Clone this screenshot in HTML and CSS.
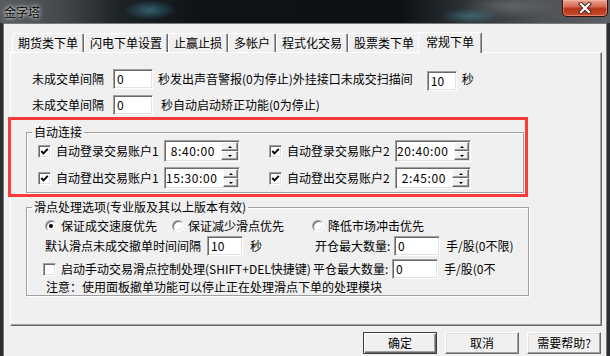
FILE: index.html
```html
<!DOCTYPE html>
<html>
<head>
    <meta charset="utf-8">
    <title>金字塔</title>
    <link rel="stylesheet" href="styles.css">
</head>
<body>
    <div class="titlebar">
        <span class="title">金字塔</span>
        <a class="close">
            <svg width="16" height="12" viewBox="0 0 16 12">
                <path d="M4 2 L12 10 M12 2 L4 10" stroke="#4a2a22" stroke-width="4.2" stroke-linecap="square" fill="none"/>
                <path d="M4 2 L12 10 M12 2 L4 10" stroke="#fff" stroke-width="2.2" stroke-linecap="square" fill="none"/>
            </svg>
        </a>
    </div>
    <div class="client">
        <ul class="tabs">
            <li>期货类下单</li>
            <li>闪电下单设置</li>
            <li>止赢止损</li>
            <li>多帐户</li>
            <li>程式化交易</li>
            <li>股票类下单</li>
            <li class="on">常规下单</li>
        </ul>
        <div class="panel">
            <div class="line">
                <span class="lbl">未成交单间隔</span>
                <span class="edit w40">0</span>
                <span class="after1">秒发出声音警报(0为停止)外挂接口未成交扫描间</span>
                <span class="edit w30 low">10</span>
                <span class="unit">秒</span>
            </div>
            <div class="line">
                <span class="lbl">未成交单间隔</span>
                <span class="edit w40">0</span>
                <span class="after2">秒自动启动矫正功能(0为停止)</span>
            </div>

            <fieldset class="grp1">
                <legend>自动连接</legend>
                <div class="auto">
                    <div class="item">
                        <span class="cb"><svg width="9" height="9" viewBox="0 0 9 9"><path d="M1.3 4 L3.5 6.3 L7.8 1.8" stroke="#000" stroke-width="1.9" fill="none"/></svg></span>
                        <span class="name">自动登录交易账户1</span>
                        <span class="spin"><span class="val">8:40:00</span><span class="btns"><i class="up"></i><i class="dn"></i></span></span>
                    </div>
                    <div class="item">
                        <span class="cb"><svg width="9" height="9" viewBox="0 0 9 9"><path d="M1.3 4 L3.5 6.3 L7.8 1.8" stroke="#000" stroke-width="1.9" fill="none"/></svg></span>
                        <span class="name">自动登录交易账户2</span>
                        <span class="spin"><span class="val">20:40:00</span><span class="btns"><i class="up"></i><i class="dn"></i></span></span>
                    </div>
                    <div class="item">
                        <span class="cb"><svg width="9" height="9" viewBox="0 0 9 9"><path d="M1.3 4 L3.5 6.3 L7.8 1.8" stroke="#000" stroke-width="1.9" fill="none"/></svg></span>
                        <span class="name">自动登出交易账户1</span>
                        <span class="spin"><span class="val">15:30:00</span><span class="btns"><i class="up"></i><i class="dn"></i></span></span>
                    </div>
                    <div class="item">
                        <span class="cb"><svg width="9" height="9" viewBox="0 0 9 9"><path d="M1.3 4 L3.5 6.3 L7.8 1.8" stroke="#000" stroke-width="1.9" fill="none"/></svg></span>
                        <span class="name">自动登出交易账户2</span>
                        <span class="spin"><span class="val">2:45:00</span><span class="btns"><i class="up"></i><i class="dn"></i></span></span>
                    </div>
                </div>
            </fieldset>

            <fieldset class="grp2">
                <legend>滑点处理选项(专业版及其以上版本有效)</legend>
                <div class="slip">
                    <div class="radios">
                        <span class="opt"><span class="rd on"></span>保证成交速度优先</span>
                        <span class="opt"><span class="rd"></span>保证减少滑点优先</span>
                        <span class="opt"><span class="rd"></span>降低市场冲击优先</span>
                    </div>
                    <div class="srow">
                        <span class="left">默认滑点未成交撤单时间间隔<span class="edit w36">10</span><span class="unit2">秒</span></span>
                        <span class="right open"><span class="qty">开仓最大数量:</span><span class="edit w46">0</span><span class="hint">手/股(0不限)</span></span>
                    </div>
                    <div class="srow tall">
                        <span class="left"><span class="cb nochk"></span>启动手动交易滑点控制处理(SHIFT+DEL快捷键)</span>
                        <span class="right close2"><span class="qty">平仓最大数量:</span><span class="edit w46">0</span><span class="hint">手/股(0不</span></span>
                    </div>
                    <div class="note">注意：使用面板撤单功能可以停止正在处理滑点下单的处理模块</div>
                </div>
            </fieldset>
        </div>

        <div class="actions">
            <button class="btn def">确定</button>
            <button class="btn">取消</button>
            <button class="btn">需要帮助?</button>
        </div>

        <div class="mark"></div>
    </div>
</body>
</html>
```

FILE: styles.css
```css
* { box-sizing: border-box; }
html, body { margin: 0; padding: 0; }
body { width: 610px; height: 356px; overflow: hidden; background: #2c3033; color: #000; font: 12px/14px "Noto Sans CJK SC", "Noto Sans", sans-serif; }

/* title bar */
.titlebar { height: 23px; display: flex; align-items: flex-start;
    background:
        radial-gradient(ellipse 26px 10px at 150px 10px, rgba(70,150,175,.55), transparent),
        radial-gradient(ellipse 30px 8px at 470px 16px, rgba(80,160,180,.45), transparent),
        radial-gradient(ellipse 50px 12px at 510px 6px, rgba(120,125,130,.55), transparent),
        linear-gradient(90deg, #585c60 0, #45494d 60px, #1c2226 120px, #0d1317 200px, #0b1115 400px, #2a2f33 460px, #4d5155 540px, #5c6064 610px); }
.title { margin: 4px 0 0 4px; line-height: 16px; text-shadow: 0 0 3px #fff, 0 0 6px rgba(255,255,255,.7); }
.close { margin: 0 2px 0 auto; width: 46px; height: 17px; display: flex; align-items: center; justify-content: center;
    border: 1px solid #3a0e06; border-top: 0; border-radius: 0 0 5px 5px;
    background: linear-gradient(#e8a898, #d66a52 40%, #b8321a 55%, #c8502e);
    box-shadow: inset 0 0 0 1px rgba(255,190,175,.45); }

/* client */
.client { position: relative; height: 333px; margin: 0 3px; background: #f0f0f0; border: 1px solid #7a7a7a; border-bottom: 0; }

.tabs { display: flex; align-items: flex-end; height: 19px; margin: 9px 0 0 8px; padding: 0; list-style: none; }
.tabs li { height: 19px; padding: 0 5px; line-height: 18px; white-space: nowrap;
    border: 1px solid #fff; border-right-color: #696969; border-bottom: 0; border-radius: 2px 2px 0 0;
    box-shadow: inset -1px 0 #a0a0a0; }
.tabs li.on { height: 21px; margin: 0 -2px -1px; padding: 0 7px; line-height: 17px; position: relative; z-index: 1; background: #f0f0f0; }

.panel { width: 592px; height: 274px; margin-left: 6px; padding: 16px 0 0 15px;
    border: 1px solid; border-color: #fff #696969 #696969 #fff; box-shadow: inset -1px -1px #a0a0a0; }

.line { display: flex; align-items: center; height: 20px; margin-left: 6px; white-space: nowrap; }
.line + .line { margin-top: 6px; }
.lbl { width: 72px; }
.after1 { margin-left: 5px; }
.after2 { margin-left: 8px; }
.line .w40 { margin-left: 9px; }
.line .w30 { margin-left: 14px; }
.low { margin-top: 4px; }
.unit { margin-left: 5px; }

.edit { display: inline-block; height: 20px; padding: 2px 0 0 3px; line-height: 14px; background: #fff; vertical-align: middle;
    border: 1px solid; border-color: #a0a0a0 #fff #fff #a0a0a0; box-shadow: inset 1px 1px #696969, inset -1px -1px #e3e3e3; }
.w30 { width: 30px; }
.w36 { width: 36px; }
.w40 { width: 40px; }
.w46 { width: 46px; }

/* group boxes */
fieldset { min-width: 0; margin: 0; padding: 0; border: 1px solid #a0a0a0; box-shadow: 1px 1px 0 #fff, inset 1px 1px 0 #fff; }
legend { margin-left: 5px; padding: 0 2px; line-height: 14px; }
.grp1 { width: 498px; margin-top: 10px; padding-bottom: 3px; }
.grp2 { width: 503px; margin-top: 7px; padding-bottom: 1px; }

.auto { display: grid; grid-template-columns: 231px auto; row-gap: 5px; margin-top: 1px; padding-left: 11px; }
.item { display: flex; align-items: center; height: 22px; white-space: nowrap; }
.name { width: 103px; margin-left: 5px; }

.cb { display: flex; align-items: center; justify-content: center; flex: none; width: 13px; height: 13px; background: #fff;
    border: 1px solid; border-color: #a0a0a0 #fff #fff #a0a0a0; box-shadow: inset 1px 1px #696969, inset -1px -1px #e3e3e3; }

.spin { display: flex; width: 76px; height: 22px; margin-left: 5px; background: #fff;
    border: 1px solid; border-color: #a0a0a0 #fff #fff #a0a0a0; box-shadow: inset 1px 1px #696969, inset -1px -1px #e3e3e3; padding: 1px 1px 1px 1px; }
.spin .val { flex: 1; text-align: right; padding-right: 6px; line-height: 18px; letter-spacing: .6px; }
.spin .btns { display: flex; flex-direction: column; width: 17px; }
.spin i { flex: 1; display: flex; align-items: center; justify-content: center; background: #f0f0f0;
    border: 1px solid; border-color: #fff #696969 #696969 #fff; box-shadow: inset -1px -1px #a0a0a0; }
.spin i::before { content: ""; border-left: 2px solid transparent; border-right: 2px solid transparent; }
.spin i.up::before { border-bottom: 2px solid #000; }
.spin i.dn::before { border-top: 2px solid #000; }

/* slippage */
.slip { padding-left: 18px; white-space: nowrap; }
.radios { display: grid; grid-template-columns: 127px 140px auto; height: 20px; margin-top: 2px; align-items: center; }
.opt { display: flex; align-items: center; gap: 4px; }
.rd { display: flex; align-items: center; justify-content: center; width: 12px; height: 12px; border-radius: 50%; background: #fff;
    border: 1px solid; border-color: #a0a0a0 #fff #fff #a0a0a0; box-shadow: inset 1px 1px #696969, inset -1px -1px #e3e3e3; }
.rd.on::after { content: ""; width: 4px; height: 4px; border-radius: 50%; background: #000; }

.srow { display: grid; grid-template-columns: 267px auto; height: 20px; align-items: center; }
.srow.tall { height: 22px; margin-top: 2px; }
.srow .left { display: flex; align-items: center; }
.srow .left .cb { margin: 0 5px 0 -2px; }
.w36 { margin-left: 6px; }
.unit2 { margin-left: 7px; }
.srow .right { display: flex; align-items: center; }
.open { margin-left: 3px; }
.close2 { margin-left: 1px; }
.qty { width: 79px; }
.hint { margin-left: 6px; }
.note { margin-left: 1px; line-height: 14px; }

/* buttons */
.actions { display: flex; justify-content: flex-end; gap: 8px; margin-top: 6px; padding-right: 5px; }
.btn { width: 74px; height: 22px; padding: 0; font: inherit; line-height: 18px; color: #000; background: #f0f0f0;
    border: 1px solid; border-color: #fff #696969 #696969 #fff; box-shadow: inset -1px -1px #a0a0a0, inset 1px 1px #e3e3e3; }
.btn.def { border-color: #3c3c3c; box-shadow: inset 1px 1px #fff, inset -1px -1px #696969, inset -2px -2px #a0a0a0; }

/* red annotation frame */
.mark { position: absolute; left: 4px; top: 93px; width: 520px; height: 80px; border: 3px solid #fb3b3b; pointer-events: none; }
```
